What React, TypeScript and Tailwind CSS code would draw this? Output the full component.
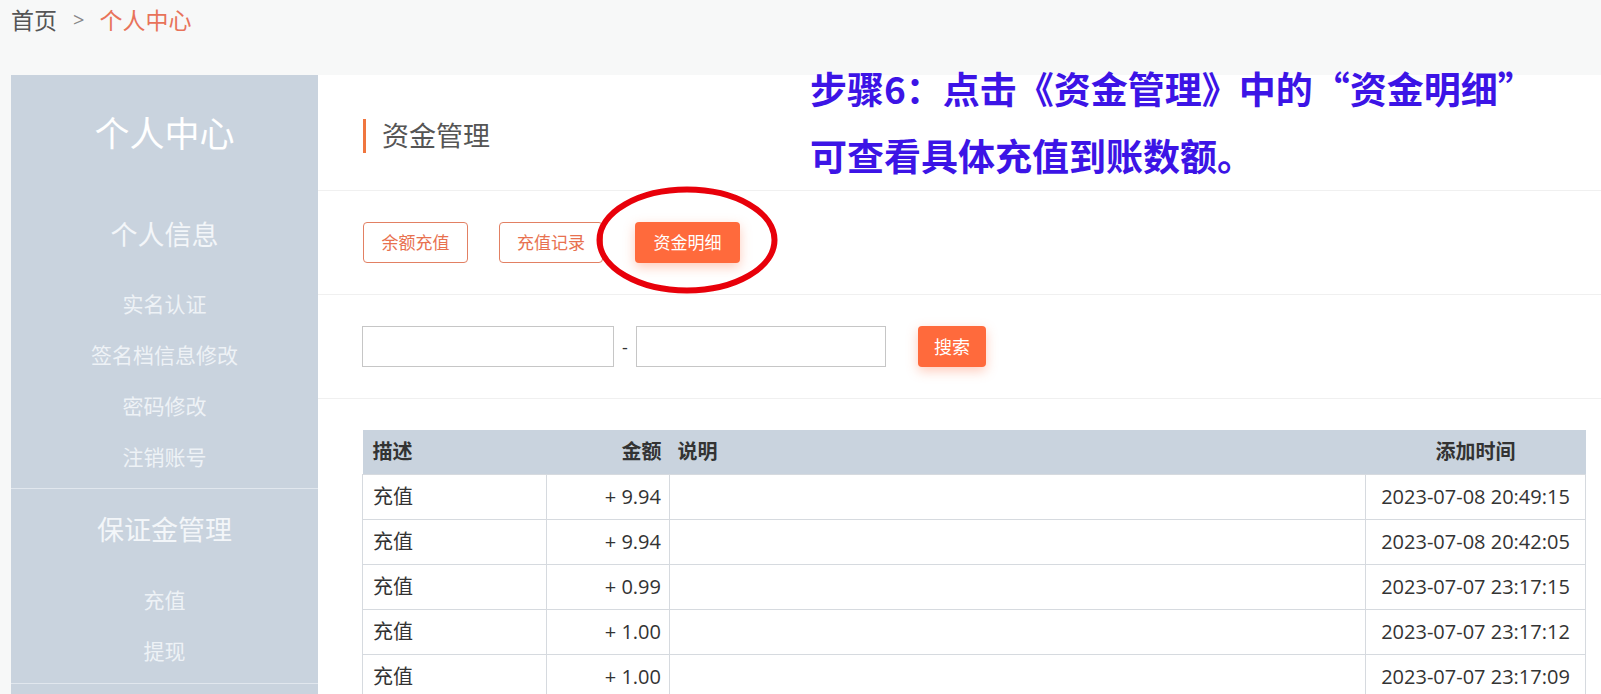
import React from "react";

const rows = [
  { d: "充值", a: "+ 9.94", t: "2023-07-08 20:49:15" },
  { d: "充值", a: "+ 9.94", t: "2023-07-08 20:42:05" },
  { d: "充值", a: "+ 0.99", t: "2023-07-07 23:17:15" },
  { d: "充值", a: "+ 1.00", t: "2023-07-07 23:17:12" },
  { d: "充值", a: "+ 1.00", t: "2023-07-07 23:17:09" },
];

export default function App() {
  return (
    <div className="relative w-[1601px] h-[694px] overflow-hidden bg-[#f7f8f8] font-['Open_Sans','Noto_Sans_CJK_SC',sans-serif]">
      {/* breadcrumb */}
      <div className="h-[75px] pl-[11px] pt-[2px] flex items-start">
        <div className="flex items-center h-[36px] text-[23px] leading-none">
          <span className="text-[#555]">首页</span>
          <span className="ml-[16px] text-[#888] text-[20px]">&gt;</span>
          <span className="ml-[15px] text-[#e8735a]">个人中心</span>
        </div>
      </div>

      <div className="flex h-[619px]">
        {/* sidebar */}
        <div className="ml-[11px] w-[307px] shrink-0 bg-[#c9d3de] text-center flex flex-col">
          <div className="h-[124px] pb-[8px] shrink-0 flex items-center justify-center text-[35px] text-white leading-none">个人中心</div>
          <div className="h-[70px] mb-[11px] shrink-0 flex items-center justify-center text-[27px] text-[#f3f6f9] leading-none">个人信息</div>
          {["实名认证", "签名档信息修改", "密码修改", "注销账号"].map((s) => (
            <div key={s} className="h-[51px] shrink-0 pb-[3px] flex items-center justify-center text-[21px] text-[#eef2f6] leading-none">{s}</div>
          ))}
          <div className="mt-[4px] shrink-0 border-t border-[#e1e7ee]" />
          <div className="h-[87px] pb-[6px] shrink-0 flex items-center justify-center text-[27px] text-[#f3f6f9] leading-none">保证金管理</div>
          {["充值", "提现"].map((s) => (
            <div key={s} className="h-[51px] shrink-0 pb-[2px] flex items-center justify-center text-[21px] text-[#eef2f6] leading-none">{s}</div>
          ))}
          <div className="mt-[5px] shrink-0 border-t border-[#e1e7ee]" />
        </div>

        {/* main */}
        <div className="flex-1 bg-white flex flex-col">
          <div className="h-[116px] shrink-0 pt-[6px] border-b border-[#f0f0f0] flex items-center pl-[45px]">
            <div className="w-[3px] h-[34px] bg-[#f0763f]" />
            <div className="ml-[16px] text-[27px] text-[#555] leading-none">资金管理</div>
          </div>

          <div className="h-[104px] shrink-0 border-b border-[#f0f0f0] flex items-center pl-[45px]">
            <button className="w-[105px] h-[41px] rounded-[4px] border border-[#e28063] text-[#e8714f] text-[17px] leading-none">余额充值</button>
            <button className="ml-[31px] w-[104px] h-[41px] rounded-[4px] border border-[#e28063] text-[#e8714f] text-[17px] leading-none">充值记录</button>
            <button className="ml-[32px] w-[105px] h-[41px] rounded-[4px] bg-[#ff6a3c] text-white text-[17px] leading-none shadow-[0_4px_12px_rgba(255,106,60,0.35)]">资金明细</button>
          </div>

          <div className="h-[104px] shrink-0 border-b border-[#f0f0f0] flex items-center pl-[44px]">
            <div className="w-[252px] h-[41px] border border-[#c6c6c6]" />
            <div className="w-[22px] text-center text-[18px] text-[#333] leading-none">-</div>
            <div className="w-[250px] h-[41px] border border-[#c6c6c6]" />
            <button className="ml-[32px] w-[68px] h-[41px] rounded-[4px] bg-[#ff6a3c] text-white text-[18px] leading-none shadow-[0_4px_12px_rgba(255,106,60,0.35)]">搜索</button>
          </div>

          <div className="shrink-0 pl-[44px] pt-[31px]">
            <table className="w-[1223px] border-collapse table-fixed text-[20px] text-[#333]">
              <colgroup>
                <col className="w-[184px]" />
                <col className="w-[123px]" />
                <col className="w-[696px]" />
                <col className="w-[220px]" />
              </colgroup>
              <thead>
                <tr className="bg-[#c9d3de] h-[44px]">
                  <th className="text-left font-bold pl-[10px]">描述</th>
                  <th className="text-right font-bold pr-[8px]">金额</th>
                  <th className="text-left font-bold pl-[8px]">说明</th>
                  <th className="text-center font-bold">添加时间</th>
                </tr>
              </thead>
              <tbody>
                {rows.map((r, i) => (
                  <tr key={i} className="h-[45px]">
                    <td className="border border-[#d6dadf] pl-[10px]">{r.d}</td>
                    <td className="border border-[#d6dadf] text-right pr-[8px]">{r.a}</td>
                    <td className="border border-[#d6dadf]" />
                    <td className="border border-[#d6dadf] text-center">{r.t}</td>
                  </tr>
                ))}
              </tbody>
            </table>
          </div>
        </div>
      </div>

      {/* annotation overlay */}
      <div className="absolute left-[810px] top-[70px] text-[37px] font-bold text-[#3c14e6] leading-none font-['Noto_Sans_CJK_SC',sans-serif] whitespace-nowrap">
        步骤6：点击《资金管理》中的“资金明细”
      </div>
      <div className="absolute left-[810px] top-[137px] text-[37px] font-bold text-[#3c14e6] leading-none font-['Noto_Sans_CJK_SC',sans-serif] whitespace-nowrap">
        可查看具体充值到账数额。
      </div>
      <svg className="absolute left-[596px] top-[186px]" width="182" height="108" viewBox="0 0 182 108">
        <ellipse cx="91" cy="54" rx="87.5" ry="50.5" fill="none" stroke="#e8000a" strokeWidth="6" />
      </svg>
    </div>
  );
}
